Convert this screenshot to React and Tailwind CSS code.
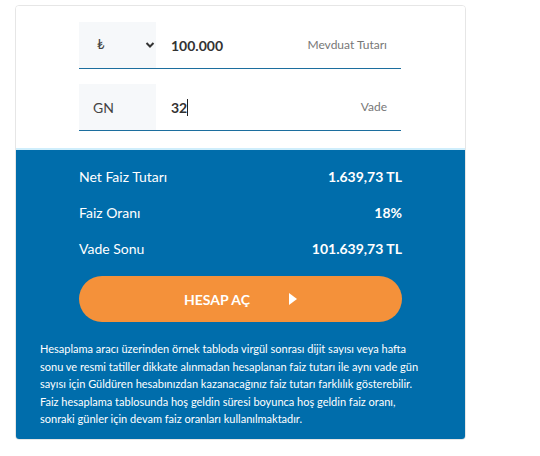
import React from 'react'

const rows = [
  ['Net Faiz Tutarı', '1.639,73 TL'],
  ['Faiz Oranı', '18%'],
  ['Vade Sonu', '101.639,73 TL'],
]

export default function App() {
  return (
    <div className="w-[540px] h-[456px] bg-white pt-[5px] pl-[15px]" style={{ fontFamily: 'Lato, "Noto Sans", sans-serif' }}>
      <div className="w-[451px] rounded-[4px] border border-[#e6e6e6] overflow-hidden">
        {/* inputs */}
        <div className="bg-white pt-[16px] pb-[17px] pl-[63px] pr-[64px] flex flex-col gap-[15px]">
          <div className="flex h-[47px] border-b-[1.5px] border-[#1c6e9e]">
            <div className="w-[77px] bg-[#f6f8fa] flex items-center justify-between pl-[18px] pr-[1px]">
              <span className="text-[13px] text-[#444]">₺</span>
              <svg width="10" height="8" viewBox="0 0 10 8">
                <path d="M1.5 2 L5 5.5 L8.5 2" fill="none" stroke="#333" strokeWidth="2" />
              </svg>
            </div>
            <div className="flex-1 flex items-center justify-between pl-[15px] pr-[14px]">
              <span className="text-[14px] font-bold text-[#333]">100.000</span>
              <span className="text-[12px] text-[#777]">Mevduat Tutarı</span>
            </div>
          </div>
          <div className="flex h-[47px] border-b-[1.5px] border-[#1c6e9e]">
            <div className="w-[77px] bg-[#f6f8fa] flex items-center pl-[14px]">
              <span className="text-[14px] text-[#444]">GN</span>
            </div>
            <div className="flex-1 flex items-center justify-between pl-[15px] pr-[14px]">
              <span className="text-[14px] font-bold text-[#333] flex items-center">32<span className="inline-block w-px h-[17px] bg-[#222]"></span></span>
              <span className="text-[12px] text-[#777]">Vade</span>
            </div>
          </div>
        </div>
        {/* results */}
        <div className="bg-[#006dab] border-t-2 border-[#cfeefc] pt-[8px] pb-[11px]">
          <div className="px-[63px] flex flex-col">
            {rows.map(([l, v]) => (
              <div key={l} className="flex justify-between items-center h-[36px] text-white text-[14px]">
                <span>{l}</span>
                <span className="font-bold">{v}</span>
              </div>
            ))}
            <div className="mt-[10px] h-[46px] rounded-full bg-[#f4913a] flex items-center justify-center gap-[39px] text-white">
              <span className="font-bold text-[14px]">HESAP AÇ</span>
              <svg width="8" height="12" viewBox="0 0 8 12">
                <path d="M0 0 L8 6 L0 12 Z" fill="white" />
              </svg>
            </div>
          </div>
          <p className="mt-[18px] pl-[24px] pr-[40px] text-white text-[11px] leading-[17.5px]">
            Hesaplama aracı üzerinden örnek tabloda virgül sonrası dijit sayısı veya hafta sonu ve resmi tatiller dikkate alınmadan hesaplanan faiz tutarı ile aynı vade gün sayısı için Güldüren hesabınızdan kazanacağınız faiz tutarı farklılık gösterebilir. Faiz hesaplama tablosunda hoş geldin süresi boyunca hoş geldin faiz oranı, sonraki günler için devam faiz oranları kullanılmaktadır.
          </p>
        </div>
      </div>
    </div>
  )
}
